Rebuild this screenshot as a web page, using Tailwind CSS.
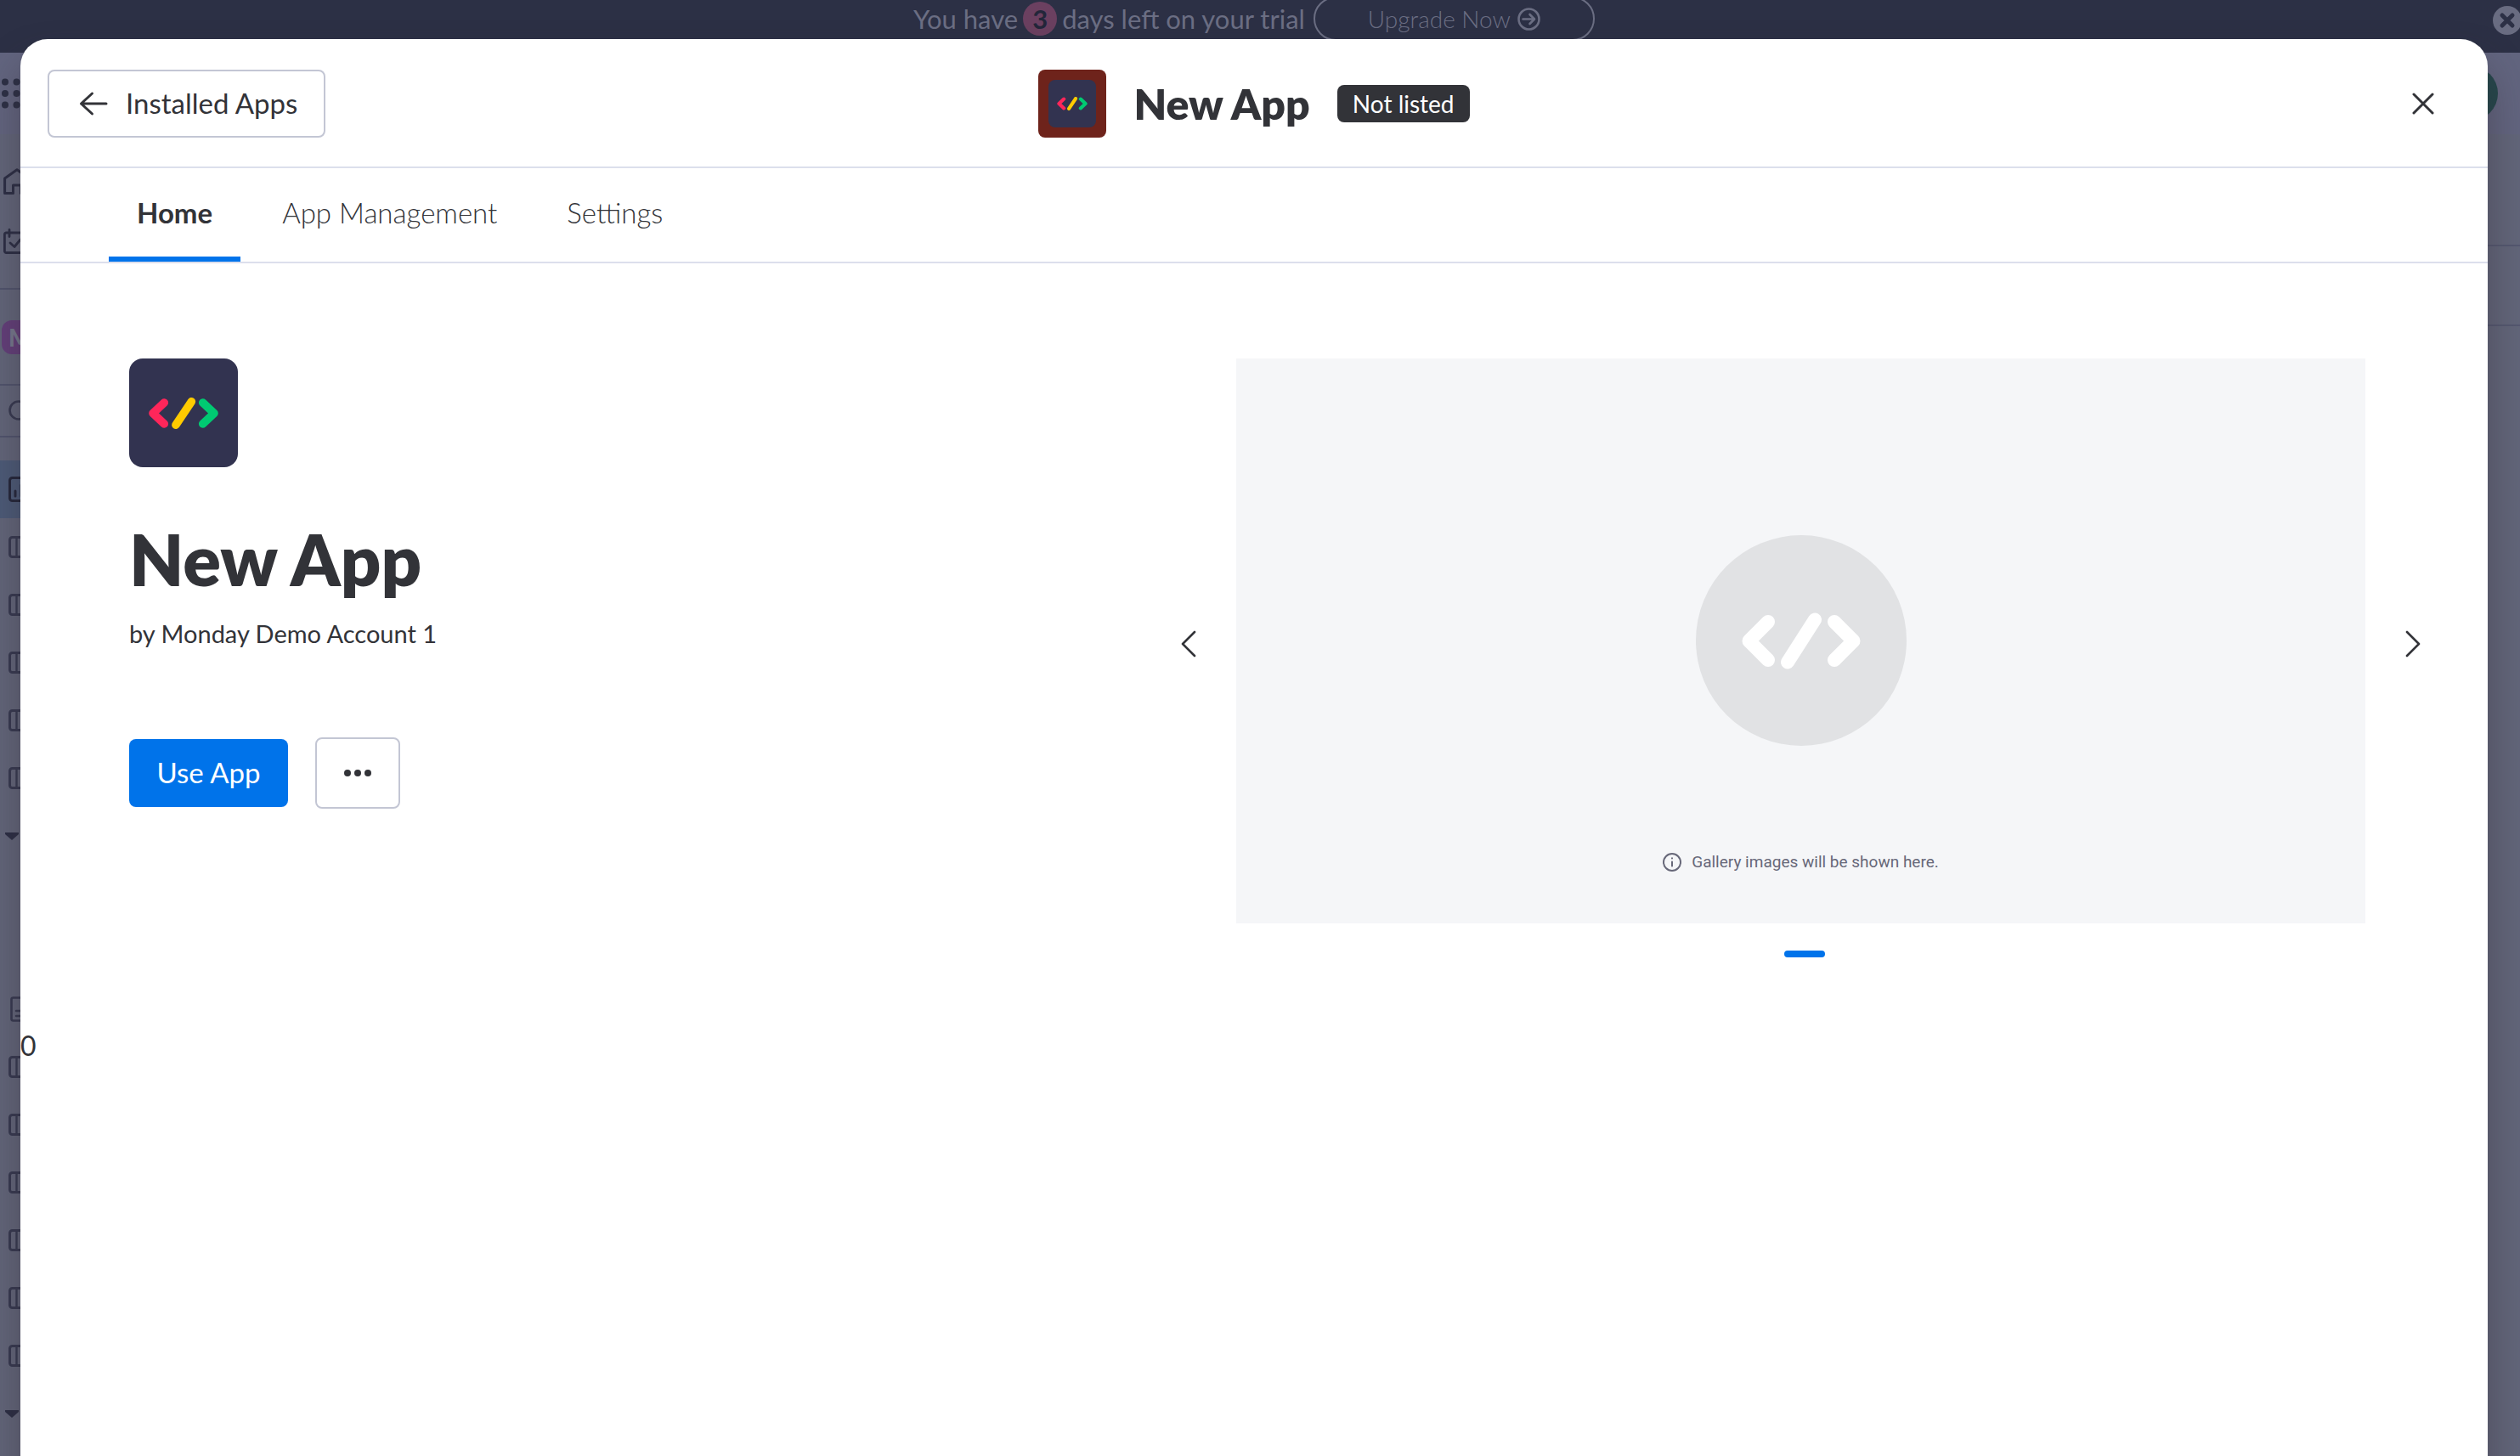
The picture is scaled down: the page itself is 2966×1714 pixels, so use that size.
<!DOCTYPE html>
<html lang="en">
<head>
<meta charset="utf-8">
<title>New App</title>
<script src="https://cdn.jsdelivr.net/npm/@tailwindcss/browser@4"></script>
</head>
<body class="relative flex h-screen flex-col overflow-hidden bg-[#62667a] font-['Lato',sans-serif] text-[#323338]">

<!-- Shared icon symbols -->
<svg class="hidden" aria-hidden="true">
  <symbol id="board" viewBox="0 0 30 26"><rect x="1.5" y="1.5" width="27" height="23" rx="3" fill="none" stroke="currentColor" stroke-width="3"/><path d="M9.500 2v22M19 2v22" stroke="currentColor" stroke-width="2.400"/></symbol>
  <symbol id="dash" viewBox="0 0 30 30"><rect x="1.500" y="1.500" width="27" height="27" rx="3" fill="none" stroke="currentColor" stroke-width="3"/><path d="M8 17v6M15 10v13M22 14v9" stroke="currentColor" stroke-width="3" stroke-linecap="round"/></symbol>
  <symbol id="doc" viewBox="0 0 24 30"><rect x="1.500" y="1.500" width="21" height="27" rx="2" fill="none" stroke="currentColor" stroke-width="2.600"/><path d="M7 17h10M7 23h10" stroke="currentColor" stroke-width="2.600" stroke-linecap="round"/></symbol>
  <symbol id="code" viewBox="0 0 82 37" fill="none" stroke-width="9.600" stroke-linecap="round" stroke-linejoin="round"><path d="M18.300 6 5 18.500 18.300 31" class="stroke-[var(--a)]"/><path d="M50.300 4.800 32 32.200" class="stroke-[var(--b)]"/><path d="M63.700 6 77 18.500 63.700 31" class="stroke-[var(--c)]"/></symbol>
</svg>

<!-- Trial banner -->
<div class="relative flex h-[62px] shrink-0 items-center justify-center bg-[#2c3045] pr-3.5 pb-[18px] text-[31px] leading-10 text-[#6b6e83]">
  <span>You have</span>
  <span class="mx-1.5 flex size-10 items-center justify-center rounded-full bg-[#6b4060] font-bold text-[#23263a]">3</span>
  <span>days left on your trial</span>
  <button class="ml-2.5 flex h-[52px] items-center gap-2 rounded-full border-2 border-[#6b6e83] px-[62px] text-[28px] font-light">Upgrade Now
    <svg class="size-[27px]" viewBox="0 0 27 27" fill="none" stroke="currentColor" stroke-width="2.600" stroke-linecap="round" stroke-linejoin="round"><circle cx="13.500" cy="13.500" r="12"/><path d="M6.500 13.500h13M14.500 8l5.500 5.500-5.500 5.500"/></svg>
  </button>
  <button class="absolute top-[7px] -right-0.5" aria-label="Dismiss">
    <svg class="size-[34px]" viewBox="0 0 34 34"><circle cx="17" cy="17" r="17" fill="#696c81"/><path d="M11 11l12 12M23 11 11 23" stroke="#2c3045" stroke-width="5" stroke-linecap="round"/></svg>
  </button>
</div>

<!-- Product top bar -->
<header class="flex h-24 shrink-0 items-center justify-between bg-[#62657f]">
  <svg class="ml-px h-9 w-10 text-[#2c3045]" viewBox="0 0 40 36" fill="currentColor"><g><circle cx="5" cy="4.500" r="4"/><circle cx="18.500" cy="4.500" r="4"/><circle cx="5" cy="18" r="4"/><circle cx="18.500" cy="18" r="4"/><circle cx="5" cy="31.500" r="4"/><circle cx="18.500" cy="31.500" r="4"/></g></svg>
  <span class="mr-[26px] size-16 rounded-full bg-[#24474b]"></span>
</header>

<!-- Sidebar and board behind the dialog -->
<div class="flex min-h-0 flex-1">
  <nav class="w-[280px] text-[#363950]">
    <div class="flex h-[183px] flex-col gap-10 border-b-2 border-[#50546d] pt-10 pl-1 text-[#2b2e44]">
      <svg class="h-[31px] w-8 shrink-0" viewBox="0 0 32 31" fill="none" stroke="currentColor" stroke-width="3" stroke-linejoin="round"><path d="M1.600 12 16 1.800 30.400 12v17.500H20.500V20h-9v9.500H1.600z"/></svg>
      <svg class="h-[30px] w-9 shrink-0" viewBox="0 0 36 30" fill="none" stroke="currentColor" stroke-width="2.800" stroke-linecap="round" stroke-linejoin="round"><rect x="1.400" y="5" width="33" height="23.500" rx="2"/><path d="M7 1.500v8M29 1.500v8M8 17l5 4.500L20 13"/></svg>
    </div>
    <div class="flex h-[113px] items-center border-b-2 border-[#50546d] pl-0.5">
      <span class="flex size-10 items-center rounded-xl bg-[#633f7a] pl-2 text-[28px] font-black text-[#767a8e]">M</span>
    </div>
    <div class="flex h-[61px] items-center border-b-2 border-[#50546d] pl-2.5">
      <svg class="size-[26px]" viewBox="0 0 26 26" fill="none" stroke="currentColor" stroke-width="2.600" stroke-linecap="round"><circle cx="12" cy="12" r="10.500"/><path d="M20 20l5 5"/></svg>
    </div>
    <ul class="pt-[27px] [&>li]:flex [&>li]:h-[68px] [&>li]:items-center [&>li]:pl-2.5">
      <li class="bg-[#4c5b78] text-[#23263a]"><svg class="size-[30px]"><use href="#dash"/></svg></li>
      <li><svg class="h-[26px] w-[30px]"><use href="#board"/></svg></li>
      <li><svg class="h-[26px] w-[30px]"><use href="#board"/></svg></li>
      <li><svg class="h-[26px] w-[30px]"><use href="#board"/></svg></li>
      <li><svg class="h-[26px] w-[30px]"><use href="#board"/></svg></li>
      <li><svg class="h-[26px] w-[30px]"><use href="#board"/></svg></li>
      <li class="text-[#2b2e44]"><svg class="-ml-1 h-[9px] w-4" viewBox="0 0 16 9"><path d="M0 0h16v2L8 9 0 2z" fill="currentColor"/></svg></li>
      <li></li>
      <li></li>
      <li><svg class="ml-0.5 h-[30px] w-6"><use href="#doc"/></svg></li>
      <li><svg class="h-[26px] w-[30px]"><use href="#board"/></svg></li>
      <li><svg class="h-[26px] w-[30px]"><use href="#board"/></svg></li>
      <li><svg class="h-[26px] w-[30px]"><use href="#board"/></svg></li>
      <li><svg class="h-[26px] w-[30px]"><use href="#board"/></svg></li>
      <li><svg class="h-[26px] w-[30px]"><use href="#board"/></svg></li>
      <li><svg class="h-[26px] w-[30px]"><use href="#board"/></svg></li>
      <li class="text-[#2b2e44]"><svg class="-ml-1 h-[9px] w-4" viewBox="0 0 16 9"><path d="M0 0h16v2L8 9 0 2z" fill="currentColor"/></svg></li>
    </ul>
  </nav>
  <div class="flex-1">
    <div class="h-[132px] border-b-2 border-[#545870]"></div>
    <div class="h-[94px] border-b-2 border-[#545870]"></div>
  </div>
</div>

<!-- App dialog -->
<section role="dialog" aria-label="New App" class="absolute top-[46px] right-[38px] -bottom-20 left-6 rounded-t-[32px] bg-white shadow-[0_30px_48px_rgba(50,40,50,0.45)]">
  <header class="grid h-[152px] grid-cols-[1fr_auto_1fr] items-center border-b-2 border-[#dcdfec] px-8 pt-0.5">
    <button class="flex h-20 w-[327px] items-center gap-5 justify-self-start rounded-lg border-2 border-[#c3c6d4] pl-[34px] text-[33px]">
      <svg class="h-8 w-9" viewBox="0 0 36 32" fill="none" stroke="currentColor" stroke-width="3" stroke-linecap="round" stroke-linejoin="round"><path d="M33 16H3.500M16.500 4 3.500 16l13 12"/></svg>
      Installed Apps
    </button>
    <div class="flex items-center">
      <span class="flex size-20 items-center justify-center rounded-lg bg-[#6e231b]">
        <span class="flex size-14 items-center justify-center rounded-lg bg-[#323350]"><svg class="h-4 w-9 [--a:#ff265a] [--b:#ffcb00] [--c:#00ca72]"><use href="#code"/></svg></span>
      </span>
      <h1 class="ml-8 text-[50px] leading-[60px] font-extrabold">New App</h1>
      <span class="ml-8 flex h-11 items-center rounded-lg bg-[#323338] px-[18px] text-[28px] text-white">Not listed</span>
    </div>
    <button class="flex h-16 w-[88px] items-center justify-center justify-self-end" aria-label="Close">
      <svg class="size-[26px]" viewBox="0 0 26 26" stroke="currentColor" stroke-width="3" stroke-linecap="round"><path d="M2 2l22 22M24 2 2 24"/></svg>
    </button>
  </header>

  <nav class="flex h-28 gap-4 border-b-2 border-[#dcdfec] pl-26 text-[33px] leading-[40px] font-light">
    <a href="#" class="border-b-6 border-[#0073ea] px-[33px] pt-8 font-bold">Home</a>
    <a href="#" class="px-[33px] pt-8">App Management</a>
    <a href="#" class="px-[33px] pt-8">Settings</a>
  </nav>

  <main class="flex pt-28 pr-14 pl-32">
    <div class="min-w-0 flex-[1215]">
      <span class="flex size-32 items-center justify-center rounded-2xl bg-[#323350]"><svg class="h-[37px] w-[82px] [--a:#ff265a] [--b:#ffcb00] [--c:#00ca72]"><use href="#code"/></svg></span>
      <h2 class="mt-15 text-[83px] leading-24 font-extrabold">New App</h2>
      <p class="mt-5 text-[29px] leading-10">by Monday Demo Account 1</p>
      <div class="mt-[102px] flex items-center gap-8">
        <button class="h-20 w-[187px] rounded-lg bg-[#0073ea] text-[33px] text-white">Use App</button>
        <button class="flex h-[84px] w-[100px] items-center justify-center rounded-lg border-2 border-[#c3c6d4]" aria-label="More options">
          <svg class="h-2 w-8" viewBox="0 0 32 8" fill="currentColor"><circle cx="4" cy="4" r="4"/><circle cx="16" cy="4" r="4"/><circle cx="28" cy="4" r="4"/></svg>
        </button>
      </div>
    </div>

    <div class="min-w-0 flex-[1505]">
      <div class="flex items-center gap-6">
        <button class="flex w-16 shrink-0 justify-center pt-2" aria-label="Previous image">
          <svg class="h-8 w-5" viewBox="0 0 20 32" fill="none" stroke="currentColor" stroke-width="2.600" stroke-linecap="round" stroke-linejoin="round"><path d="M17 2 3 16l14 14"/></svg>
        </button>
        <figure class="grid aspect-[2/1] min-w-0 flex-1 grid-rows-[1fr_auto_1fr] justify-items-center bg-[#f5f6f8]">
          <span class="row-start-2 flex size-[248px] items-center justify-center rounded-full bg-[#e1e2e4]"><svg class="h-[67px] w-[140px]" viewBox="0 0 140 67" fill="none" stroke="#fff" stroke-width="16" stroke-linecap="round" stroke-linejoin="round"><path d="M31 11 8.500 33.500 31 56"/><path d="M86 8.500 54 58.500"/><path d="M109 11l22.500 22.500L109 56"/></svg></span>
          <figcaption class="row-start-3 flex items-center gap-3 self-start pt-[125px] font-['Roboto',sans-serif] text-[19px] leading-6 text-[#676879]">
            <svg class="size-[22px]" viewBox="0 0 22 22" fill="none" stroke="currentColor" stroke-width="2" stroke-linecap="round"><circle cx="11" cy="11" r="10"/><path d="M11 10.500v5M11 6.300v.2"/></svg>
            Gallery images will be shown here.
          </figcaption>
        </figure>
        <button class="flex w-16 shrink-0 justify-center pt-2" aria-label="Next image">
          <svg class="h-8 w-5" viewBox="0 0 20 32" fill="none" stroke="currentColor" stroke-width="2.600" stroke-linecap="round" stroke-linejoin="round"><path d="M3 2l14 14L3 30"/></svg>
        </button>
      </div>
      <div class="mt-8 flex justify-center pl-2"><button class="h-2 w-12 rounded-full bg-[#0073ea]" aria-label="Image 1"></button></div>
    </div>
  </main>
  <p class="mt-21 text-[32px] leading-10">0</p>
</section>
</body>
</html>
